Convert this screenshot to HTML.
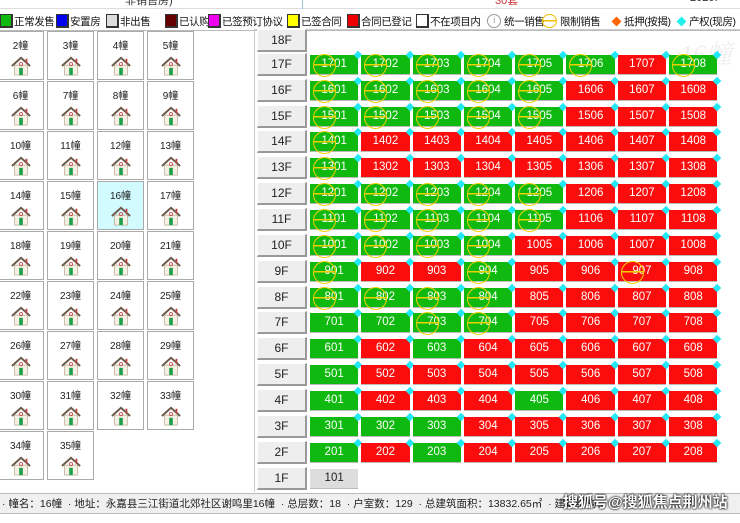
<!DOCTYPE html><html><head><meta charset="utf-8"><style>
*{box-sizing:border-box;margin:0;padding:0}
body{width:740px;height:523px;overflow:hidden;background:#fff;font-family:"Liberation Sans","Noto Sans CJK SC",sans-serif;position:relative;font-size:12px}
.a{position:absolute}
.lg{top:12px;height:18px;display:flex;align-items:center;font-size:10.5px;color:#111;white-space:nowrap;letter-spacing:-0.4px}
.sw{display:inline-block;width:13px;height:14px;border:1px solid #333;border-right-width:2px;border-bottom-width:2px;margin-right:1px}
.b{width:47px;height:49px;border:1px solid #aaa;background:#fff;text-align:center;font-size:10px;padding-top:5px;color:#222}
.b svg{display:block;margin:4px auto 0}
.panel{left:254px;top:29px;width:486px;height:463px;border-left:1px solid #ccc;border-top:1px solid #ccc}
.fb{left:257px;width:50px;height:23px;background:#eee;border:1px solid #fff;border-right:2px solid #999;border-bottom:2px solid #999;text-align:center;line-height:20px;font-size:12px;color:#222}
.r{left:310px;display:flex;height:20px}
.u{width:48.3px;height:20px;margin-right:3px;color:#fff;font-size:11.5px;text-align:center;line-height:19px;position:relative;border-bottom:1px solid #bbb}
.g{background:#10b90f}.d{background:#fb0d0d}
.c::before{content:"";position:absolute;left:3px;top:-1px;width:21px;height:21px;border:1.5px solid #f0d000;border-radius:50%;background:linear-gradient(transparent 9px,#f0d000 9px,#f0d000 10.5px,transparent 10.5px)}
.u::after{content:"";position:absolute;right:-3px;top:-3px;width:6px;height:6px;background:#22e8f5;transform:rotate(45deg)}
.n::after{display:none}
.st{left:0;top:493px;width:740px;height:21px;background:#f0f0f0;border-top:1px solid #bbb;border-bottom:1px solid #bbb;font-size:10.5px;line-height:20px;color:#222;padding-left:2px;white-space:nowrap}
</style></head><body>
<svg width="0" height="0" style="position:absolute"><defs><symbol id="h" viewBox="0 0 24 22"><path d="M2 11 L12 2 L22 11" fill="none" stroke="#6b5a4a" stroke-width="2.2"/><rect x="5" y="10" width="14" height="11" fill="#f6efe4" stroke="#b8a890" stroke-width=".8"/><rect x="10" y="13" width="4" height="8" fill="#1aa04a"/><circle cx="12" cy="9" r="1.8" fill="none" stroke="#c03030" stroke-width=".8"/><rect x="17" y="3" width="2" height="5" fill="#b44"/></symbol></defs></svg>
<div class="a" style="left:0;top:0;width:740px;height:9px;border-bottom:1px solid #ddd"></div>
<div class="a" style="left:125px;top:-8px;font-size:11px;color:#333">非销售房)</div>
<div class="a" style="left:302px;top:0;width:1px;height:9px;background:#9cc"></div>
<div class="a" style="left:495px;top:-8px;font-size:11px;color:#c33">30套</div>
<div class="a" style="left:690px;top:-8px;font-size:11px;color:#333">2020.</div>

<div class="a lg" style="left:0"><i class="sw" style="background:#10b90f"></i>正常发售</div>
<div class="a lg" style="left:56px"><i class="sw" style="background:#0000ee"></i>安置房</div>
<div class="a lg" style="left:106px"><i class="sw" style="background:#ddd"></i>非出售</div>
<div class="a lg" style="left:165px"><i class="sw" style="background:#660000"></i>已认购</div>
<div class="a lg" style="left:208px"><i class="sw" style="background:#ee00ee"></i>已签预订协议</div>
<div class="a lg" style="left:287px"><i class="sw" style="background:#ffff00"></i>已签合同</div>
<div class="a lg" style="left:347px"><i class="sw" style="background:#ee0000"></i>合同已登记</div>
<div class="a lg" style="left:416px"><i class="sw" style="background:#fff"></i>不在项目内</div>
<div class="a lg" style="left:487px"><i style="display:inline-block;width:14px;height:14px;border:1.5px solid #999;border-radius:50%;color:#999;font-size:9px;line-height:11px;text-align:center;font-style:normal;margin-right:3px">i</i>统一销售</div>
<div class="a lg" style="left:542px"><i style="display:inline-block;width:15px;height:14px;border:1.5px solid #f0c000;border-radius:50%;background:linear-gradient(transparent 5px,#f0c000 5px,#f0c000 6.5px,transparent 6.5px);margin-right:3px"></i>限制销售</div>
<div class="a lg" style="left:611px"><i style="display:inline-block;width:7px;height:7px;background:#f60;transform:rotate(45deg);margin:0 4px 0 2px"></i>抵押(按揭)</div>
<div class="a lg" style="left:676px"><i style="display:inline-block;width:7px;height:7px;background:#2ee;transform:rotate(45deg);margin:0 4px 0 2px"></i>产权(现房)</div>
<div class="a" style="left:0;top:30px;width:740px;height:1px;background:#bbb"></div>

<div class="a b" style="left:-3px;top:31px">2幢<svg width="22" height="20"><use href="#h"/></svg></div>
<div class="a b" style="left:47px;top:31px">3幢<svg width="22" height="20"><use href="#h"/></svg></div>
<div class="a b" style="left:97px;top:31px">4幢<svg width="22" height="20"><use href="#h"/></svg></div>
<div class="a b" style="left:147px;top:31px">5幢<svg width="22" height="20"><use href="#h"/></svg></div>
<div class="a b" style="left:-3px;top:81px">6幢<svg width="22" height="20"><use href="#h"/></svg></div>
<div class="a b" style="left:47px;top:81px">7幢<svg width="22" height="20"><use href="#h"/></svg></div>
<div class="a b" style="left:97px;top:81px">8幢<svg width="22" height="20"><use href="#h"/></svg></div>
<div class="a b" style="left:147px;top:81px">9幢<svg width="22" height="20"><use href="#h"/></svg></div>
<div class="a b" style="left:-3px;top:131px">10幢<svg width="22" height="20"><use href="#h"/></svg></div>
<div class="a b" style="left:47px;top:131px">11幢<svg width="22" height="20"><use href="#h"/></svg></div>
<div class="a b" style="left:97px;top:131px">12幢<svg width="22" height="20"><use href="#h"/></svg></div>
<div class="a b" style="left:147px;top:131px">13幢<svg width="22" height="20"><use href="#h"/></svg></div>
<div class="a b" style="left:-3px;top:181px">14幢<svg width="22" height="20"><use href="#h"/></svg></div>
<div class="a b" style="left:47px;top:181px">15幢<svg width="22" height="20"><use href="#h"/></svg></div>
<div class="a b" style="left:97px;top:181px;background:#d2fbff">16幢<svg width="22" height="20"><use href="#h"/></svg></div>
<div class="a b" style="left:147px;top:181px">17幢<svg width="22" height="20"><use href="#h"/></svg></div>
<div class="a b" style="left:-3px;top:231px">18幢<svg width="22" height="20"><use href="#h"/></svg></div>
<div class="a b" style="left:47px;top:231px">19幢<svg width="22" height="20"><use href="#h"/></svg></div>
<div class="a b" style="left:97px;top:231px">20幢<svg width="22" height="20"><use href="#h"/></svg></div>
<div class="a b" style="left:147px;top:231px">21幢<svg width="22" height="20"><use href="#h"/></svg></div>
<div class="a b" style="left:-3px;top:281px">22幢<svg width="22" height="20"><use href="#h"/></svg></div>
<div class="a b" style="left:47px;top:281px">23幢<svg width="22" height="20"><use href="#h"/></svg></div>
<div class="a b" style="left:97px;top:281px">24幢<svg width="22" height="20"><use href="#h"/></svg></div>
<div class="a b" style="left:147px;top:281px">25幢<svg width="22" height="20"><use href="#h"/></svg></div>
<div class="a b" style="left:-3px;top:331px">26幢<svg width="22" height="20"><use href="#h"/></svg></div>
<div class="a b" style="left:47px;top:331px">27幢<svg width="22" height="20"><use href="#h"/></svg></div>
<div class="a b" style="left:97px;top:331px">28幢<svg width="22" height="20"><use href="#h"/></svg></div>
<div class="a b" style="left:147px;top:331px">29幢<svg width="22" height="20"><use href="#h"/></svg></div>
<div class="a b" style="left:-3px;top:381px">30幢<svg width="22" height="20"><use href="#h"/></svg></div>
<div class="a b" style="left:47px;top:381px">31幢<svg width="22" height="20"><use href="#h"/></svg></div>
<div class="a b" style="left:97px;top:381px">32幢<svg width="22" height="20"><use href="#h"/></svg></div>
<div class="a b" style="left:147px;top:381px">33幢<svg width="22" height="20"><use href="#h"/></svg></div>
<div class="a b" style="left:-3px;top:431px">34幢<svg width="22" height="20"><use href="#h"/></svg></div>
<div class="a b" style="left:47px;top:431px">35幢<svg width="22" height="20"><use href="#h"/></svg></div>

<div class="a panel"></div>
<div class="a" style="left:680px;top:34px;font-size:26px;font-style:italic;color:#eee;font-family:'Liberation Serif','Noto Serif CJK SC',serif">16幢</div>

<div class="a fb" style="top:29px">18F</div>
<div class="a fb" style="top:53px">17F</div>
<div class="a fb" style="top:79px">16F</div>
<div class="a fb" style="top:105px">15F</div>
<div class="a fb" style="top:130px">14F</div>
<div class="a fb" style="top:156px">13F</div>
<div class="a fb" style="top:182px">12F</div>
<div class="a fb" style="top:208px">11F</div>
<div class="a fb" style="top:234px">10F</div>
<div class="a fb" style="top:260px">9F</div>
<div class="a fb" style="top:286px">8F</div>
<div class="a fb" style="top:311px">7F</div>
<div class="a fb" style="top:337px">6F</div>
<div class="a fb" style="top:363px">5F</div>
<div class="a fb" style="top:389px">4F</div>
<div class="a fb" style="top:415px">3F</div>
<div class="a fb" style="top:441px">2F</div>
<div class="a fb" style="top:467px">1F</div>

<div class="a r" style="top:55px"><div class="u g c">1701</div><div class="u g c">1702</div><div class="u g c">1703</div><div class="u g c">1704</div><div class="u g c">1705</div><div class="u g c">1706</div><div class="u d">1707</div><div class="u g c">1708</div></div>
<div class="a r" style="top:81px"><div class="u g c">1601</div><div class="u g c">1602</div><div class="u g c">1603</div><div class="u g c">1604</div><div class="u g c">1605</div><div class="u d">1606</div><div class="u d">1607</div><div class="u d">1608</div></div>
<div class="a r" style="top:107px"><div class="u g c">1501</div><div class="u g c">1502</div><div class="u g c">1503</div><div class="u g c">1504</div><div class="u g c">1505</div><div class="u d">1506</div><div class="u d">1507</div><div class="u d">1508</div></div>
<div class="a r" style="top:132px"><div class="u g c">1401</div><div class="u d">1402</div><div class="u d">1403</div><div class="u d">1404</div><div class="u d">1405</div><div class="u d">1406</div><div class="u d">1407</div><div class="u d">1408</div></div>
<div class="a r" style="top:158px"><div class="u g c">1301</div><div class="u d">1302</div><div class="u d">1303</div><div class="u d">1304</div><div class="u d">1305</div><div class="u d">1306</div><div class="u d">1307</div><div class="u d">1308</div></div>
<div class="a r" style="top:184px"><div class="u g c">1201</div><div class="u g c">1202</div><div class="u g c">1203</div><div class="u g c">1204</div><div class="u g c">1205</div><div class="u d">1206</div><div class="u d">1207</div><div class="u d">1208</div></div>
<div class="a r" style="top:210px"><div class="u g c">1101</div><div class="u g c">1102</div><div class="u g c">1103</div><div class="u g c">1104</div><div class="u g c">1105</div><div class="u d">1106</div><div class="u d">1107</div><div class="u d">1108</div></div>
<div class="a r" style="top:236px"><div class="u g c">1001</div><div class="u g c">1002</div><div class="u g c">1003</div><div class="u g c">1004</div><div class="u d">1005</div><div class="u d">1006</div><div class="u d">1007</div><div class="u d">1008</div></div>
<div class="a r" style="top:262px"><div class="u g c">901</div><div class="u d">902</div><div class="u d">903</div><div class="u g c">904</div><div class="u d">905</div><div class="u d">906</div><div class="u d c">907</div><div class="u d">908</div></div>
<div class="a r" style="top:288px"><div class="u g c">801</div><div class="u g c">802</div><div class="u g c">803</div><div class="u g c">804</div><div class="u d">805</div><div class="u d">806</div><div class="u d">807</div><div class="u d">808</div></div>
<div class="a r" style="top:313px"><div class="u g">701</div><div class="u g">702</div><div class="u g c">703</div><div class="u g c">704</div><div class="u d">705</div><div class="u d">706</div><div class="u d">707</div><div class="u d">708</div></div>
<div class="a r" style="top:339px"><div class="u g">601</div><div class="u d">602</div><div class="u g">603</div><div class="u d">604</div><div class="u d">605</div><div class="u d">606</div><div class="u d">607</div><div class="u d">608</div></div>
<div class="a r" style="top:365px"><div class="u g">501</div><div class="u d">502</div><div class="u d">503</div><div class="u d">504</div><div class="u d">505</div><div class="u d">506</div><div class="u d">507</div><div class="u d">508</div></div>
<div class="a r" style="top:391px"><div class="u g">401</div><div class="u d">402</div><div class="u d">403</div><div class="u d">404</div><div class="u g">405</div><div class="u d">406</div><div class="u d">407</div><div class="u d">408</div></div>
<div class="a r" style="top:417px"><div class="u g">301</div><div class="u g">302</div><div class="u g">303</div><div class="u d">304</div><div class="u d">305</div><div class="u d">306</div><div class="u d">307</div><div class="u d">308</div></div>
<div class="a r" style="top:443px"><div class="u g">201</div><div class="u d">202</div><div class="u g">203</div><div class="u d">204</div><div class="u d">205</div><div class="u d">206</div><div class="u d">207</div><div class="u d">208</div></div>
<div class="a r" style="top:469px"><div class="u n" style="background:#ddd;color:#222">101</div></div>

<div class="a st">· 幢名：16幢 &nbsp;· 地址：永嘉县三江街道北郊社区谢鸣里16幢 &nbsp;· 总层数：18 &nbsp;· 户室数：129 &nbsp;· 总建筑面积：13832.65㎡ &nbsp;· 建筑结构：<span style="position:absolute;left:563px;top:-1px;font-size:15px;color:#fff;font-weight:bold;text-shadow:0 0 2px #000,0 0 2px #000">搜狐号@搜狐焦点荆州站</span></div>
<div class="a" style="left:0;top:515px;width:740px;height:8px;background:#fff"></div>
</body></html>
